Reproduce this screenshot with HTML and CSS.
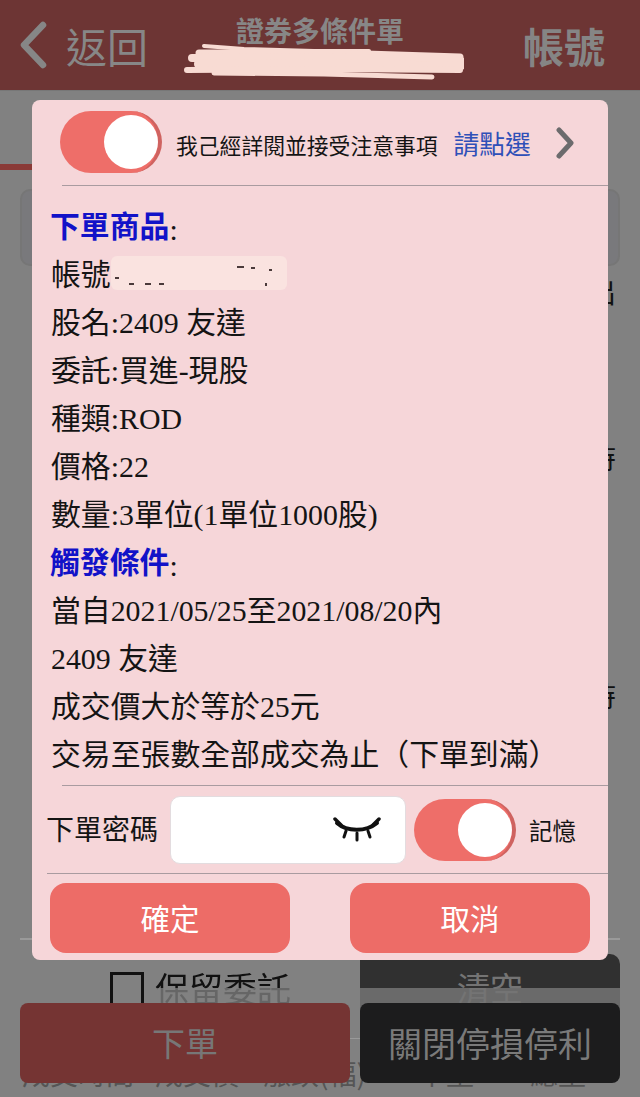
FILE: index.html
```html
<!DOCTYPE html>
<html lang="zh-Hant">
<head>
<meta charset="utf-8">
<title>證券多條件單</title>
<link rel="stylesheet" href="styles.css">
</head>
<body>
<div class="screen">
  <header class="topbar">
    <div class="back">
      <svg class="back-icon" viewBox="0 0 30 48" width="30" height="48"><path d="M25 4 L6 24 L25 44" fill="none" stroke="#868686" stroke-width="6.5" stroke-linecap="round" stroke-linejoin="round"/></svg>
      <span class="back-text">返回</span>
    </div>
    <div class="title">證券多條件單</div>
    <div class="account">帳號</div>
    <svg class="scribble" viewBox="0 0 280 36" width="280" height="36"><g fill="none" stroke="#f8dbd3" stroke-linecap="round"><path d="M20 2 L60 5 L130 7 L185 7" stroke-width="4"/><path d="M15 9 L150 9 L276 13" stroke-width="7"/><path d="M8 14 L140 13 L277 17" stroke-width="8"/><path d="M14 20 L140 19 L277 22" stroke-width="8"/><path d="M3 26 L140 25 L276 26" stroke-width="6"/><path d="M30 29 L140 30 L248 33" stroke-width="5"/></g></svg>
  </header>

  <main class="page">
    <div class="tab-line"></div>
    <div class="search-box"></div>
    <div class="peek peek-1">出</div>
    <div class="peek peek-2">時</div>
    <div class="peek peek-3">時</div>
    <div class="rule"></div>
    <div class="options">
      <label class="keep"><span class="box"></span><span class="keep-text">保留委託</span></label>
      <div class="clear"><span class="clear-text">清空</span></div>
    </div>
    <div class="quote-head">
      <span>成交時間</span><span>成交價</span><span>漲跌(幅)</span><span>單量</span><span>總量</span>
    </div>
  </main>

  <div class="action-bar">
    <button class="act act-order">下單</button>
    <button class="act act-stop">關閉停損停利</button>
  </div>

  <section class="modal">
    <div class="agree">
      <span class="toggle toggle-top"><span class="knob"></span></span>
      <span class="agree-text">我己經詳閱並接受注意事項</span>
      <a class="agree-link">請點選</a>
      <svg class="chevron" viewBox="0 0 20 32" width="20" height="32"><path d="M4 3 L16 16 L4 29" fill="none" stroke="#6c6b6d" stroke-width="5" stroke-linecap="round" stroke-linejoin="round"/></svg>
    </div>
    <div class="details">
      <p><b class="head">下單商品</b>:</p>
      <p class="acct">帳號:<svg class="redact" viewBox="0 0 180 40" width="180" height="40"><rect x="2" y="3" width="176" height="34" rx="6" fill="#fae3e0"/><g fill="#4a3a3a"><rect x="6" y="24" width="4" height="2"/><rect x="20" y="30" width="5" height="2"/><rect x="36" y="30" width="6" height="2"/><rect x="50" y="30" width="5" height="2"/><rect x="128" y="13" width="7" height="2"/><rect x="142" y="14" width="4" height="2"/><rect x="160" y="16" width="3" height="2"/><rect x="156" y="30" width="2" height="3"/></g></svg></p>
      <p>股名:2409 友達</p>
      <p>委託:買進-現股</p>
      <p>種類:ROD</p>
      <p>價格:22</p>
      <p>數量:3單位(1單位1000股)</p>
      <p><b class="head">觸發條件</b>:</p>
      <p>當自2021/05/25至2021/08/20內</p>
      <p>2409 友達</p>
      <p>成交價大於等於25元</p>
      <p>交易至張數全部成交為止（下單到滿）</p>
    </div>
    <div class="password">
      <span class="pw-label">下單密碼</span>
      <div class="pw-input">
        <svg class="eye" viewBox="0 0 48 26" width="48" height="26"><g fill="none" stroke="#111" stroke-linecap="round"><path d="M4 6 C14 15 33 15 44 6" stroke-width="4"/><path d="M2 2 L8 8" stroke-width="3.5"/><path d="M46 2 L40 8" stroke-width="3.5"/><path d="M13 14 L11 20" stroke-width="3"/><path d="M24 16 L24 23" stroke-width="3"/><path d="M35 14 L37 20" stroke-width="3"/></g></svg>
      </div>
      <span class="toggle"><span class="knob"></span></span>
      <span class="remember">記憶</span>
    </div>
    <div class="buttons">
      <button class="btn">確定</button>
      <button class="btn">取消</button>
    </div>
  </section>
</div>
</body>
</html>
```
FILE: styles.css
```css
* { box-sizing: border-box; }
html, body { margin: 0; padding: 0; }
body { font-family: "Noto Sans CJK TC", sans-serif; background: #818181; }
.screen { position: relative; width: 640px; height: 1097px; overflow: hidden; background: #818181; }

.topbar { position: relative; height: 91px; background: #6d3534; border-bottom: 1px solid #777; display: flex; align-items: center; padding: 0 35px 0 18px; color: #878787; }
.back { display: flex; align-items: center; gap: 18px; }
.back-icon { flex: none; }
.back-text { font-size: 41px; line-height: 50px; }
.title { position: absolute; left: 0; right: 0; top: 10px; text-align: center; font-size: 28px; line-height: 40px; font-weight: 700; color: #878787; }
.account { margin-left: auto; font-size: 41px; line-height: 50px; font-weight: 700; color: #858585; }
.scribble { position: absolute; left: 184px; top: 44px; }

.page { display: block; }
.tab-line { width: 32px; height: 6px; margin-top: 73px; background: #8a3a37; }
.search-box { height: 77px; margin: 19px 20px 0; border: 2px solid #767676; border-radius: 10px; background: #79797c; }
.peek { font-size: 28px; line-height: 36px; text-align: right; padding-right: 24px; color: #111; height: 36px; }
.peek-1 { margin-top: 7px; }
.peek-2 { margin-top: 130px; }
.peek-3 { margin-top: 202px; }
.rule { height: 2px; margin: 225px 20px 0; background: #9a9a9a; }
.options { display: flex; height: 84px; margin-top: 14px; padding: 0 20px; gap: 10px; }
.keep { width: 330px; display: flex; align-items: flex-start; padding: 18px 0 0 90px; gap: 11px; }
.box { width: 34px; height: 34px; border: 3px solid; border-color: #111 #111 #666 #111; flex: none; }
.keep-text { font-size: 34px; line-height: 44px; margin-top: -6px; background: linear-gradient(#111 0, #111 22px, #666 22px); -webkit-background-clip: text; background-clip: text; color: transparent; }
.clear { flex: 1; border-radius: 0 10px 0 0; background: linear-gradient(#303030 0, #303030 34px, #6a6a6a 34px); text-align: center; }
.clear-text { font-size: 33px; line-height: 66px; color: #747474; }
.quote-head { display: grid; grid-template-columns: 133px 108px 155px 112px auto; margin: 0 20px; padding: 14px 0 0 2px; border-top: 1px solid #999; font-size: 28px; line-height: 40px; color: #555; height: 59px; }

.action-bar { position: absolute; left: 20px; top: 1003px; display: flex; gap: 10px; width: 600px; height: 80px; }
.act { border: 0; border-radius: 8px; font: inherit; font-size: 33px; color: #777; padding: 0 0 2px; }
.act-order { width: 330px; background: #753433; font-size: 33px; }
.act-stop { flex: 1; background: #1c1c1d; color: #7a7a7a; font-size: 34px; white-space: nowrap; }

.modal { position: absolute; left: 32px; top: 100px; width: 576px; height: 860px; border-radius: 8px; background: #f6d6d9; display: flex; flex-direction: column; color: #141414; }
.agree { height: 86px; margin-left: 30px; padding-top: 11px; display: flex; align-items: flex-start; border-bottom: 1px solid #a99ba0; }
.toggle { flex: none; width: 102px; height: 62px; border-radius: 31px; background: #ee6e69; border-right: 4px solid #cf6360; position: relative; display: block; }
.toggle-top { margin-left: -2px; }
.knob { position: absolute; right: 0; top: 4px; width: 54px; height: 54px; border-radius: 50%; background: #fff; }
.agree-text { font-size: 21.8px; line-height: 30px; margin: 19px 0 0 14px; white-space: nowrap; }
.agree-link { font-size: 25.7px; line-height: 36px; margin: 14px 0 0 16px; color: #2f50b8; white-space: nowrap; }
.chevron { margin: 16px 0 0 24px; flex: none; }

.details { padding: 17px 0 0 19px; height: 599px; font-family: "Liberation Serif", "Noto Sans CJK TC", serif; font-size: 29.85px; line-height: 48px; }
.details p { margin: 0; white-space: nowrap; height: 48px; }
.head { color: #1212c8; font-weight: 700; font-family: "Noto Sans CJK TC", sans-serif; position: relative; top: -3px; margin-left: -1px; }
.acct { position: relative; }
.redact { position: absolute; left: 58px; top: 2px; }

.password { height: 89px; margin-left: 15px; display: flex; align-items: center; border-top: 1px solid #a99ba0; border-bottom: 1px solid #a99ba0; position: relative; }
.password::before { content: ""; position: absolute; left: 0; top: -1px; width: 15px; height: 89px; border-top: 1px solid #f6d6d9; border-bottom: 1px solid #f6d6d9; }
.pw-label { font-size: 28px; line-height: 36px; white-space: nowrap; width: 123px; flex: none; margin-top: -3px; margin-left: -1px; }
.pw-input { width: 236px; height: 68px; margin-right: 8px; background: #fff; border: 1px solid #e3dcdf; border-radius: 10px; display: flex; align-items: center; justify-content: flex-end; padding: 0 24px 0 0; flex: none; margin-left: 1px; }
.eye { margin-top: 1px; }
.remember { font-size: 23.5px; line-height: 32px; margin-left: 13px; }

.buttons { display: flex; justify-content: space-between; padding: 9px 18px 0; }
.btn { width: 240px; height: 70px; border: 0; border-radius: 16px; background: #ed6c67; color: #fff; font: inherit; font-size: 29.5px; padding: 0 0 2px; }
```
